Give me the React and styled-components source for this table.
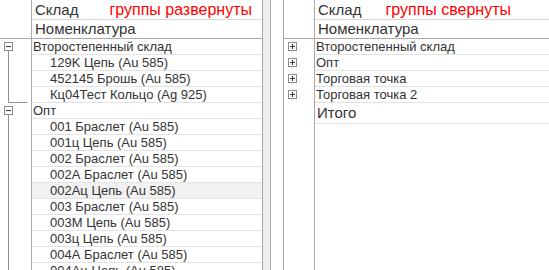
import React from 'react';
import styled, { createGlobalStyle } from 'styled-components';

const Global = createGlobalStyle`
  html, body { margin: 0; padding: 0; background: #fff; }
  body { font-family: "Liberation Sans", Arial, sans-serif; color: #333; }
`;

const Page = styled.div`
  display: flex;
  width: 549px;
  height: 270px;
  overflow: hidden;
  background: #fff;
`;

const Panel = styled.div`
  display: flex;
  flex-direction: column;
  flex: none;
  box-sizing: border-box;
  width: ${(p) => p.$width}px;
  height: 270px;
  overflow: hidden;
  padding-left: ${(p) => p.$marker || 0}px;
  border-right: ${(p) => (p.$edge ? '1px solid #a9a9a9' : 'none')};
`;

const Splitter = styled.div`
  flex: none;
  width: 8px;
  box-sizing: border-box;
  background: #ededed;
  border-right: 1px solid #a9a9a9;
`;

const Row = styled.div`
  display: flex;
  flex: ${(p) => (p.$fill ? '1' : 'none')};
  height: ${(p) => (p.$fill ? 'auto' : `${p.$h}px`)};
  box-sizing: border-box;
  border-bottom: ${(p) => (p.$strong ? '1px solid #a9a9a9' : 'none')};
`;

const TreeCell = styled.div`
  flex: none;
  width: ${(p) => (p.$bl ? 32 : 32)}px;
  box-sizing: border-box;
  border-left: ${(p) => (p.$bl ? '1px solid #a9a9a9' : 'none')};
  border-right: 1px solid #a9a9a9;
  & > svg { display: block; }
`;

const Cell = styled.div`
  flex: 1;
  min-width: 0;
  display: flex;
  align-items: baseline;
  box-sizing: border-box;
  padding-left: ${(p) => p.$pad}px;
  padding-top: ${(p) => p.$pt || 0}px;
  font-size: ${(p) => p.$fs}px;
  line-height: ${(p) => p.$lh}px;
  white-space: nowrap;
  overflow: hidden;
  color: #333;
  background: ${(p) => (p.$selected ? '#f1f1f1' : 'transparent')};
  border-bottom: ${(p) => (p.$line ? `1px solid ${p.$line}` : 'none')};
`;

const Note = styled.span`
  margin-left: ${(p) => p.$offset}px;
  font-size: 16px;
  color: #ff0000;
`;

function TreeGlyph({ kind }) {
  const gray = '#8e8e8e';
  const dark = '#333';
  return (
    <svg width="30" height="16" viewBox="0 0 30 16">
      {(kind === 'minus' || kind === 'plus') && (
        <>
          <rect x="4.5" y="3.5" width="8" height="8" fill="#fff" stroke={gray} />
          <line x1="6" y1="7.5" x2="11" y2="7.5" stroke={dark} />
          {kind === 'plus' && <line x1="8.5" y1="5" x2="8.5" y2="10" stroke={dark} />}
        </>
      )}
      {kind === 'minus' && <line x1="8.5" y1="12" x2="8.5" y2="16" stroke={gray} />}
      {kind === 'line' && <line x1="8.5" y1="0" x2="8.5" y2="16" stroke={gray} />}
      {kind === 'end' && (
        <path d="M8.5 0 V15.5 H27" fill="none" stroke={gray} />
      )}
    </svg>
  );
}

const leftRows = [
  { t: 'Второстепенный склад', k: 'minus' },
  { t: '129K Цепь (Au 585)', k: 'line', c: true },
  { t: '452145 Брошь (Au 585)', k: 'line', c: true },
  { t: 'Кц04Тест Кольцо (Ag 925)', k: 'end', c: true },
  { t: 'Опт', k: 'minus' },
  { t: '001 Браслет (Au 585)', k: 'line', c: true },
  { t: '001ц Цепь (Au 585)', k: 'line', c: true },
  { t: '002 Браслет (Au 585)', k: 'line', c: true },
  { t: '002А Браслет (Au 585)', k: 'line', c: true },
  { t: '002Ац Цепь (Au 585)', k: 'line', c: true, s: true },
  { t: '003 Браслет (Au 585)', k: 'line', c: true },
  { t: '003М Цепь (Au 585)', k: 'line', c: true },
  { t: '003ц Цепь (Au 585)', k: 'line', c: true },
  { t: '004А Браслет (Au 585)', k: 'line', c: true },
  { t: '004Ац Цепь (Au 585)', k: 'line', c: true },
];

const rightRows = [
  { t: 'Второстепенный склад', k: 'plus' },
  { t: 'Опт', k: 'plus' },
  { t: 'Торговая точка', k: 'plus' },
  { t: 'Торговая точка 2', k: 'plus' },
];

function Grid({ note, noteOffset, rows, bl, total }) {
  return (
    <>
      <Row $h={20}>
        <TreeCell $bl={bl} />
        <Cell $pad={3} $fs={15} $lh={19} $line="#d9d9d9">
          Склад
          <Note $offset={noteOffset}>{note}</Note>
        </Cell>
      </Row>
      <Row $h={19} $strong>
        <TreeCell $bl={bl} />
        <Cell $pad={3} $pt={0} $fs={15} $lh={18}>Номенклатура</Cell>
      </Row>
      {rows.map((r, i) => (
        <Row key={i} $h={16}>
          <TreeCell $bl={bl}>
            <TreeGlyph kind={r.k} />
          </TreeCell>
          <Cell
            $pad={r.c ? 18 : 1}
            $fs={13}
            $lh={15}
            $line="#e3e3e3"
            $selected={r.s}
          >
            {r.t}
          </Cell>
        </Row>
      ))}
      {total && (
        <Row $h={21}>
          <TreeCell $bl={bl} />
          <Cell $pad={2} $fs={15} $lh={20} $line="#e3e3e3">
            {total}
          </Cell>
        </Row>
      )}
      <Row $fill>
        <TreeCell $bl={bl} />
        <Cell />
      </Row>
    </>
  );
}

export default function App() {
  return (
    <>
      <Global />
      <Page>
        <Panel $width={263} $edge>
          <Grid note="группы развернуты" noteOffset={31} rows={leftRows} />
        </Panel>
        <Splitter />
        <Panel $width={278} $marker={12}>
          <Grid note="группы свернуты" noteOffset={24} rows={rightRows} bl total="Итого" />
        </Panel>
      </Page>
    </>
  );
}
